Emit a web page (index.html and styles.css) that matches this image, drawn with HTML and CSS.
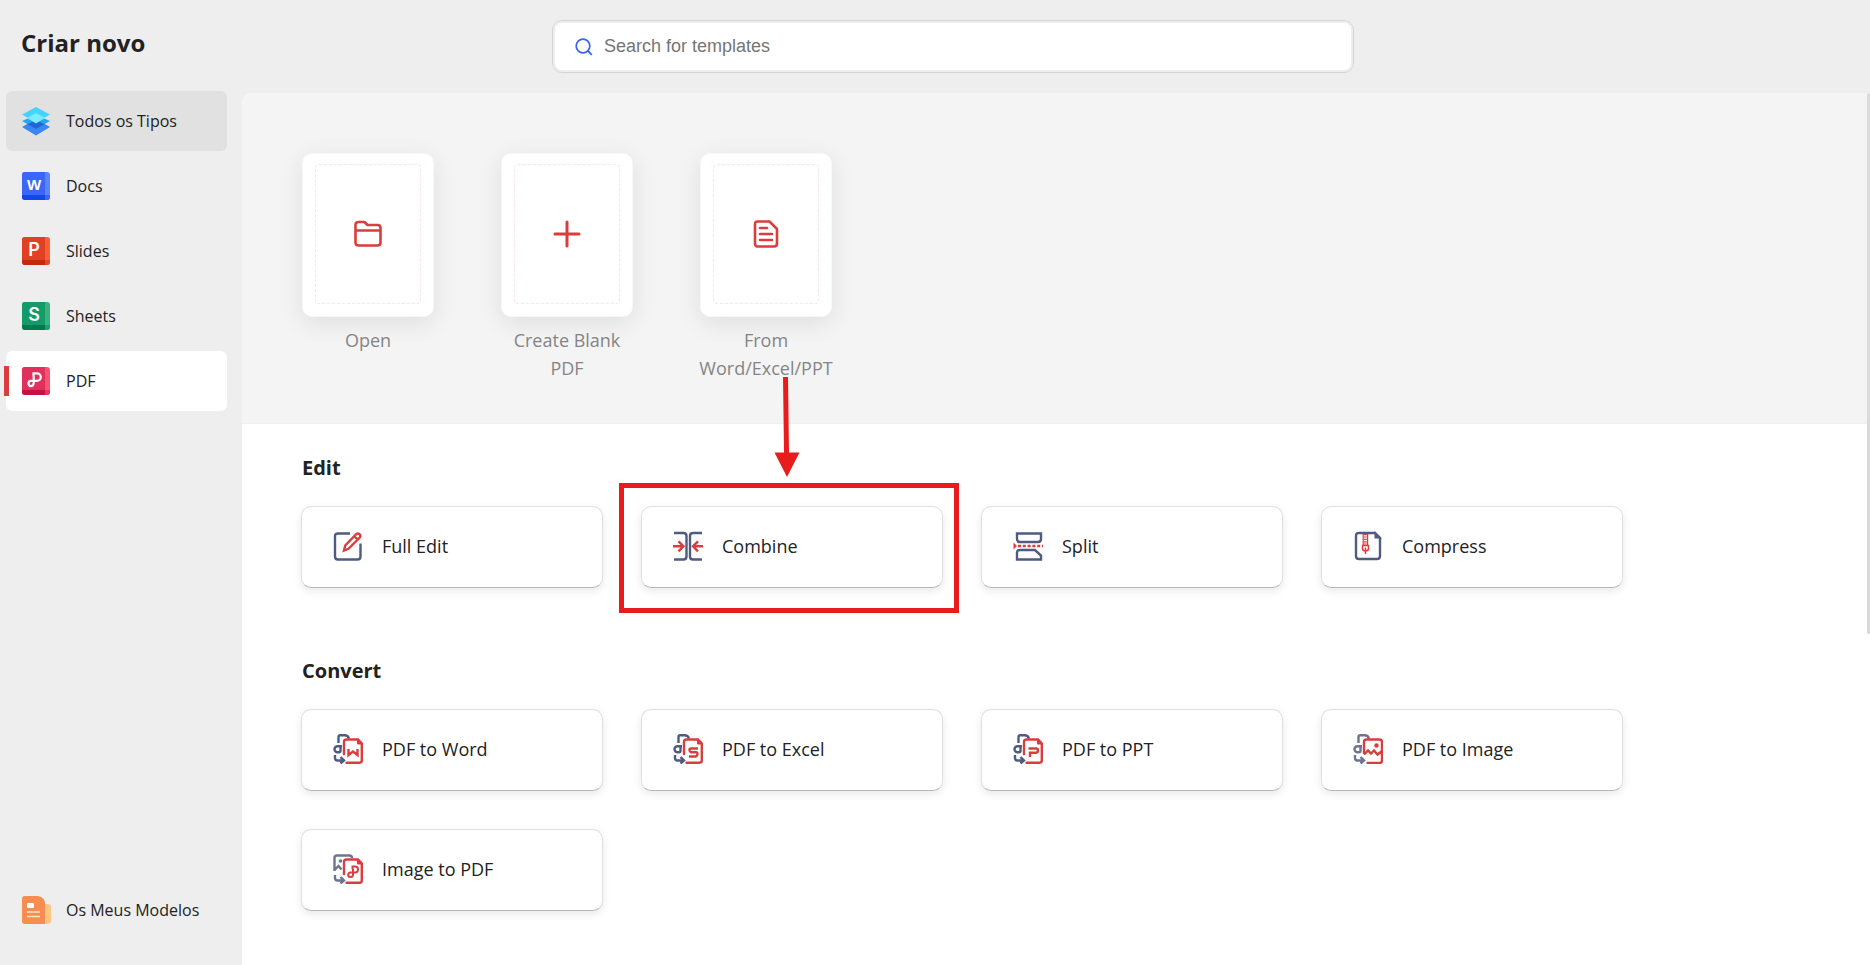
FILE: index.html
```html
<!DOCTYPE html>
<html lang="pt">
<head>
    <meta charset="UTF-8">
    <meta name="viewport" content="width=device-width, initial-scale=1.0">
    <title>Criar novo</title>
    <link rel="stylesheet" href="styles.css">
</head>
<body>
    <!-- shared icon parts -->
    <svg class="defs" aria-hidden="true">
        <symbol id="red-doc" viewBox="0 0 30 30">
            <path d="M11 20V8q0-2.5 2.5-2.5H25L28.8 9.5V26.5q0 2.3-2.5 2.3H13.5" fill="none" stroke="#d93d3d" stroke-width="2.4" stroke-linecap="round"/>
            <path d="M24.5 5l5 5h-5z" fill="#d93d3d" stroke="#d93d3d"/>
        </symbol>
        <symbol id="turn-arrow" viewBox="0 0 30 30">
            <path d="M2 21v3q0 2.5 2.5 2.5H10M7.5 23l3.5 3.5L7.5 29.5" fill="none" stroke="currentColor" stroke-width="2.4"/>
        </symbol>
        <symbol id="from-pdf" viewBox="0 0 30 30">
            <path d="M5.5 9V3q0-1.700 1.800-1.700H11.500q3.500 0 4.500 3.300M9 12.300H4.500a3 3 0 0 0 0 6h1.500q1.500 0 1.500-1.500v-3.500" fill="none" stroke="currentColor" stroke-width="2.4"/>
            <use href="#turn-arrow"/>
        </symbol>
    </svg>

    <aside class="sidebar">
        <h1>Criar novo</h1>
        <nav>
            <a class="item hover" href="#todos">
                <svg viewBox="0 0 28 28">
                    <path d="M14 12L28 20 14 28.5 0 20z" fill="#3a86f5"/>
                    <path d="M14 8L28 14 14 22 0 14z" fill="#27a5f3"/>
                    <path d="M14 13L22.5 17.200 14 22 5.5 17.200z" fill="#2563d9"/>
                    <path d="M14 0L28 7.5 14 15.5 0 7.5z" fill="#46d3ff"/>
                    <path d="M14 6L23 11 14 16.5 5 11z" fill="#7aeeff"/>
                </svg>
                <span>Todos os Tipos</span>
            </a>
            <a class="item" href="#docs">
                <svg viewBox="0 0 28 28">
                    <rect width="28" height="28" rx="3" fill="#5c85ff"/>
                    <path d="M3 0H23V23H0V3Q0 0 3 0z" fill="#3a66fb"/>
                    <path d="M0 23H23V28H3Q0 28 0 25z" fill="#1249e5"/>
                    <path d="M23 23H28V25Q28 28 25 28H23z" fill="#3a66fb"/>
                    <text x="12" y="18" class="letter">W</text>
                </svg>
                <span>Docs</span>
            </a>
            <a class="item" href="#slides">
                <svg viewBox="0 0 28 28">
                    <rect width="28" height="28" rx="3" fill="#ff5c38"/>
                    <path d="M3 0H23V23H0V3Q0 0 3 0z" fill="#e04124"/>
                    <path d="M0 23H23V28H3Q0 28 0 25z" fill="#c42a10"/>
                    <path d="M23 23H28V25Q28 28 25 28H23z" fill="#e8452a"/>
                    <text x="12" y="19" class="letter big">P</text>
                </svg>
                <span>Slides</span>
            </a>
            <a class="item" href="#sheets">
                <svg viewBox="0 0 28 28">
                    <rect width="28" height="28" rx="3" fill="#3bb27d"/>
                    <path d="M3 0H23V23H0V3Q0 0 3 0z" fill="#129a68"/>
                    <path d="M0 23H23V28H3Q0 28 0 25z" fill="#007a4d"/>
                    <path d="M23 23H28V25Q28 28 25 28H23z" fill="#1da06e"/>
                    <text x="12" y="19" class="letter big">S</text>
                </svg>
                <span>Sheets</span>
            </a>
            <a class="item active" href="#pdf" aria-current="page">
                <svg viewBox="0 0 28 28">
                    <rect width="28" height="28" rx="3" fill="#ff5273"/>
                    <path d="M3 0H23V23H0V3Q0 0 3 0z" fill="#e0315c"/>
                    <path d="M0 23H23V28H3Q0 28 0 25z" fill="#c41148"/>
                    <path d="M23 23H28V25Q28 28 25 28H23z" fill="#e8345c"/>
                    <path d="M11.5 9.5V6.300H15a3.800 3.800 0 0 1 0 7.600H8.5a2.700 2.700 0 0 0 0 5.200q3.200 0 3.200-3V9.5" fill="none" stroke="#fff" stroke-width="2.2"/>
                </svg>
                <span>PDF</span>
            </a>
        </nav>
        <a class="item models" href="#modelos">
            <svg viewBox="0 0 28 28">
                <rect x="16" y="8" width="13" height="20" rx="3" fill="#ffc582"/>
                <path d="M3 0H16Q23 1 23 8V28H3Q0 28 0 25V3Q0 0 3 0z" fill="#f88d52"/>
                <rect x="5" y="7" width="7" height="5" rx="1" fill="#fff"/>
                <path d="M5 16H18M5 20.5H18" stroke="#ffe0cc" stroke-width="1.6"/>
            </svg>
            <span>Os Meus Modelos</span>
        </a>
    </aside>

    <div class="page">
        <header class="topbar">
            <label class="search">
                <svg viewBox="0 0 18 18" aria-hidden="true">
                    <circle cx="8" cy="8" r="6.8" fill="none" stroke="#3a63f0" stroke-width="1.7"/>
                    <path d="M12.5 12.5L16.8 16.8" stroke="#3a63f0" stroke-width="1.9"/>
                </svg>
                <input type="text" placeholder="Search for templates" aria-label="Search for templates">
            </label>
        </header>

        <main class="content">
            <div class="scroll-thumb"></div>
            <section class="start">
                <button class="new" type="button">
                    <span class="sheet"><span class="dashed">
                        <svg viewBox="0 0 28 28">
                            <path d="M1.5 5Q1.5 2 4.500 2H10.5L13.5 5H23.5Q26.5 5 26.5 8V22.5Q26.5 25.5 23.5 25.5H4.500Q1.5 25.5 1.5 22.5zM1.5 10.5H26.5"/>
                        </svg>
                    </span></span>
                    <span class="name">Open</span>
                </button>
                <button class="new" type="button">
                    <span class="sheet"><span class="dashed">
                        <svg viewBox="0 0 28 28">
                            <path class="thick" d="M14 2V26M2 14H26"/>
                        </svg>
                    </span></span>
                    <span class="name">Create Blank PDF</span>
                </button>
                <button class="new" type="button">
                    <span class="sheet"><span class="dashed">
                        <svg viewBox="0 0 28 28">
                            <path d="M5.5 1.5H17.5L25 9V23.5Q25 26.5 22 26.5H5.5Q3 26.5 3 23.5V4Q3 1.5 5.5 1.5zM8 8H15M8 14H20M8 20H20"/>
                        </svg>
                    </span></span>
                    <span class="name">From Word/Excel/PPT</span>
                </button>
            </section>

            <section class="group">
                <h2>Edit</h2>
                <div class="tools">
                    <button class="tool" type="button">
                        <svg viewBox="0 0 30 30">
                            <path d="M17 2.5H5Q2 2.5 2 5.5V25.5Q2 28.5 5 28.5H24.5Q27.5 28.5 27.5 25.5V12.5" class="blue"/>
                            <path d="M11 19.5L12.2 14.5 23.5 3Q25 1.8 26.5 3.2 28.2 4.7 26.8 6.5L15.5 17.8zM21.5 5.5L25 8.8" class="red"/>
                        </svg>
                        <span>Full Edit</span>
                    </button>
                    <div class="marked">
                        <button class="tool" type="button">
                            <svg viewBox="0 0 30 30">
                                <path d="M1 2H10.5Q13.5 2 13.5 5V25.5Q13.5 28.5 10.5 28.5H1M29 2H20Q17 2 17 5V25.5Q17 28.5 20 28.5H29" class="blue"/>
                                <path d="M0 15.3H10M5.5 10.3L10.5 15.3 5.5 20.3M30 15.3H20.5M25 10.3L20 15.3 25 20.3" class="red"/>
                            </svg>
                            <span>Combine</span>
                        </button>
                        <!-- red highlight and the arrow that points to it -->
                        <div class="frame"></div>
                        <svg class="arrow" viewBox="0 0 26 100">
                            <path d="M9 0H14L15 75.5H25.5L13 100 .5 75.5H10z" fill="#e81c1c"/>
                        </svg>
                    </div>
                    <button class="tool" type="button">
                        <svg viewBox="0 0 30 30">
                            <path d="M4 2.5H28V8Q28 11 25 11H7Q4 11 4 8zM4 28.5V21.5Q4 19 7 19H22L28 24.5V28.5z" class="blue"/>
                            <path d="M5 15H30" stroke-dasharray="3 1.8" class="red"/>
                            <path d="M.5 11.5L4 15 .5 18.5z" fill="#d93d3d"/>
                        </svg>
                        <span>Split</span>
                    </button>
                    <button class="tool" type="button">
                        <svg viewBox="0 0 30 30">
                            <path d="M6 2H22L27 7V25Q27 28 24 28H6Q3 28 3 25V5Q3 2 6 2z" class="blue"/>
                            <path d="M22.5 2.5V6.5H26.5z" stroke="#4f5b80" stroke-width="2" fill="#4f5b80"/>
                            <path d="M10.2 3V14M14.6 3V14" stroke="#d93d3d" stroke-width="1.2"/>
                            <path d="M12.4 3V13.5" stroke="#d93d3d" stroke-width="3" stroke-dasharray="1.2 1.2"/>
                            <path d="M9.5 14.5H15.5V17.5Q15.5 20 12.5 20T9.5 17.5zM12.5 16.5V23" fill="none" stroke="#d93d3d" stroke-width="1.5"/>
                        </svg>
                        <span>Compress</span>
                    </button>
                </div>
            </section>

            <section class="group">
                <h2>Convert</h2>
                <div class="tools">
                    <button class="tool" type="button">
                        <svg viewBox="0 0 30 30">
                            <use href="#from-pdf"/>
                            <use href="#red-doc"/>
                            <path d="M15.5 15V21L20 17.5 24.5 21V15" class="red"/>
                        </svg>
                        <span>PDF to Word</span>
                    </button>
                    <button class="tool" type="button">
                        <svg viewBox="0 0 30 30">
                            <use href="#from-pdf"/>
                            <use href="#red-doc"/>
                            <path d="M25 14.5H18Q16.5 14.5 16.5 16T18 18.3H23Q24.5 18.3 24.5 20T23 22.5H16" class="red"/>
                        </svg>
                        <span>PDF to Excel</span>
                    </button>
                    <button class="tool" type="button">
                        <svg viewBox="0 0 30 30">
                            <use href="#from-pdf"/>
                            <use href="#red-doc"/>
                            <path d="M15.5 14.5H23Q25 14.5 25 16.5T23 18.8H17V23" class="red"/>
                        </svg>
                        <span>PDF to PPT</span>
                    </button>
                    <button class="tool" type="button">
                        <svg class="soft" viewBox="0 0 30 30">
                            <use href="#from-pdf"/>
                            <path d="M11 20V8Q11 5.5 13.5 5.5H26.5Q29 5.5 29 8V26.5Q29 29 26.5 29H13.5M11 20.5L15 16.5 18 19.5 21 16.5 24.5 20.5 29 17" class="red"/>
                            <circle cx="23.5" cy="11.5" r="2.2" fill="#d93d3d"/>
                        </svg>
                        <span>PDF to Image</span>
                    </button>
                    <button class="tool" type="button">
                        <svg class="soft" viewBox="0 0 30 30">
                            <path d="M1.5 17V4Q1.5 1.5 4 1.5H16.5Q19 1.5 19 4M1.5 16L5.5 12 8.5 15.5" fill="none" stroke="currentColor" stroke-width="2.4"/>
                            <circle cx="7.5" cy="7" r="1.8" fill="currentColor"/>
                            <use href="#turn-arrow"/>
                            <use href="#red-doc"/>
                            <path d="M19.5 15V12.5H22a3 3 0 0 1 0 6H17.5a2.300 2.300 0 0 0 0 4.600q2.500 0 2.500-2.600V15" fill="none" stroke="#d93d3d" stroke-width="2"/>
                        </svg>
                        <span>Image to PDF</span>
                    </button>
                </div>
            </section>
        </main>
    </div>
</body>
</html>
```
FILE: styles.css
```css
* {
    box-sizing: border-box;
}
body {
    margin: 0;
    height: 100vh;
    display: flex;
    overflow: hidden;
    background-color: #eeeeee;
    color: #222;
    font-family: "Open Sans", "Noto Sans", sans-serif;
}
button {
    font-family: inherit;
    color: inherit;
    cursor: pointer;
}
.defs {
    display: none;
}

/* sidebar */
.sidebar {
    width: 242px;
    flex-shrink: 0;
    display: flex;
    flex-direction: column;
    padding: 25px 15px 25px 6px;
}
.sidebar h1 {
    margin: 0 0 30px;
    padding-left: 15px;
    font-size: 24px;
    line-height: 36px;
}
.sidebar nav {
    display: flex;
    flex-direction: column;
    gap: 5px;
}
.item {
    position: relative;
    display: flex;
    align-items: center;
    gap: 16px;
    height: 60px;
    padding-left: 16px;
    border-radius: 6px;
    color: #222;
    font-size: 16px;
    text-decoration: none;
}
.item svg {
    width: 28px;
    height: 28px;
    overflow: visible;
}
.item.hover {
    background-color: #e1e1e1;
}
.item.active {
    background-color: #fff;
}
.item.active::before {
    content: "";
    position: absolute;
    left: -2px;
    top: 15px;
    width: 5px;
    height: 30px;
    background-color: #d93d3d;
}
.models {
    margin-top: auto;
}
.letter {
    fill: #fff;
    font-family: "Liberation Sans", Arial, sans-serif;
    font-size: 15px;
    font-weight: bold;
    text-anchor: middle;
}
.letter.big {
    font-family: Inter, sans-serif;
    font-size: 18px;
    font-weight: 600;
}

/* top bar */
.page {
    flex: 1;
    min-width: 0;
    display: flex;
    flex-direction: column;
}
.topbar {
    height: 93px;
    flex-shrink: 0;
    padding: 20px 516px 20px 310px;
}
.search {
    display: flex;
    align-items: center;
    gap: 11px;
    height: 53px;
    padding: 0 22px;
    border: 1px solid #d4d4d4;
    border-radius: 10px;
    background-color: #fff;
    box-shadow: inset 0 0 0 2px #eeeeee;
}
.search svg {
    width: 18px;
    height: 18px;
}
.search input {
    flex: 1;
    border: 0;
    padding: 0;
    outline: none;
    background: none;
    font-family: "Liberation Sans", Arial, sans-serif;
    font-size: 18px;
}
.search input::placeholder {
    color: #757575;
}

/* content */
.content {
    position: relative;
    flex: 1;
    overflow: hidden;
    border-top-left-radius: 10px;
    background-color: #fff;
}
.scroll-thumb {
    position: absolute;
    top: 0;
    right: 0;
    width: 3px;
    height: 62%;
    border-radius: 2px;
    background-color: #dadada;
}
.start {
    display: flex;
    gap: 65px;
    min-height: 331px;
    padding: 60px 59px 40px;
    background-color: #f4f4f4;
    border-bottom: 1px solid #f0f0f0;
}
.new {
    width: 134px;
    padding: 0;
    border: 0;
    background: none;
    display: flex;
    flex-direction: column;
    align-items: center;
    gap: 9px;
}
.sheet {
    width: 132px;
    height: 164px;
    padding: 10px 12px 12px;
    border: 1px solid #f8f8f8;
    border-radius: 10px;
    background-color: #fff;
    box-shadow: 0 6px 24px rgba(0, 0, 0, 0.09);
}
.dashed {
    display: flex;
    align-items: center;
    justify-content: center;
    height: 100%;
    border: 1px dashed #fbe3e8;
    border-radius: 4px;
}
.dashed svg {
    width: 28px;
    height: 28px;
    fill: none;
    stroke: #d93d3d;
    stroke-width: 2.6;
    stroke-linecap: round;
    stroke-linejoin: round;
}
.dashed .thick {
    stroke-width: 3;
}
.name {
    display: flex;
    justify-content: center;
    width: 140px;
    color: #858585;
    font-size: 18px;
    line-height: 28px;
}

.group {
    padding: 29px 60px 22px 59px;
}
.group + .group {
    padding-top: 46px;
}
.group h2 {
    margin: 0 0 23px;
    padding-left: 1px;
    font-size: 20px;
    line-height: 30px;
}
.tools {
    display: grid;
    grid-template-columns: repeat(auto-fill, 302px);
    gap: 38px;
}
.tool {
    display: flex;
    align-items: center;
    gap: 19px;
    width: 100%;
    height: 82px;
    padding: 0 31px 2px;
    border: 1px solid #e0e0e0;
    border-bottom-color: #b8b8b8;
    border-radius: 10px;
    background-color: #fff;
    box-shadow: 0 3px 8px rgba(0, 0, 0, 0.09);
    font-size: 18px;
}
.tool svg {
    width: 30px;
    height: 30px;
    flex-shrink: 0;
    color: #4f5b80;
}
.tool .soft {
    color: #6b7590;
}
.tool .blue,
.tool .red {
    fill: none;
    stroke: #4f5b80;
    stroke-width: 2.4;
}
.tool .red {
    stroke: #d93d3d;
}

/* highlight over the Combine card */
.marked {
    position: relative;
}
.frame {
    position: absolute;
    top: -23px;
    right: -16px;
    bottom: -25px;
    left: -22px;
    border: 5px solid #e81c1c;
    pointer-events: none;
}
.arrow {
    position: absolute;
    left: 133px;
    bottom: 111px;
    width: 26px;
    height: 100px;
}
```
